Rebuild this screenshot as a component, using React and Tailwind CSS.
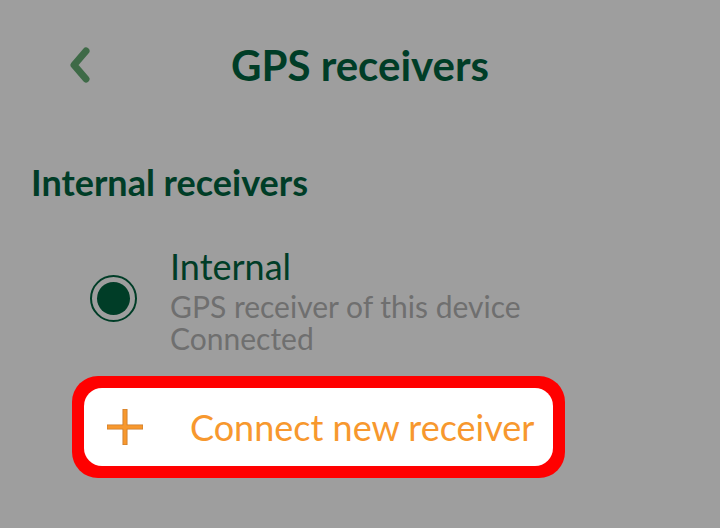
export default function App() {
    return (
        <div
            className="w-[720px] h-[528px] bg-[#9e9e9e] overflow-hidden"
            style={{ fontFamily: "Lato, 'Open Sans', sans-serif" }}
        >
            {/* Header */}
            <div className="relative h-[158px] flex items-start justify-center pt-[37px]">
                <button className="absolute left-[62px] top-[42px] w-[36px] h-[46px] flex items-center justify-center">
                    <svg width="24" height="36" viewBox="0 0 24 36">
                        <path
                            d="M18 4 L6 18 L18 32"
                            fill="none"
                            stroke="#3e6a47"
                            strokeWidth="7"
                            strokeLinecap="round"
                            strokeLinejoin="round"
                        />
                    </svg>
                </button>
                <h1 className="text-[42px] leading-[56px] font-bold text-[#003d27]">
                    GPS receivers
                </h1>
            </div>

            {/* Section */}
            <div className="pl-[31px]">
                <h2 className="text-[36px] leading-[48px] font-bold text-[#003d27]">
                    Internal receivers
                </h2>
            </div>

            <div className="mt-[36px] flex items-center pl-[90px]">
                <div className="w-[47px] h-[47px] rounded-full border-2 border-[#003d27] flex items-center justify-center">
                    <div className="w-[33px] h-[33px] rounded-full bg-[#003d27]" />
                </div>
                <div className="ml-[33px] flex flex-col">
                    <span className="text-[36px] leading-[48px] text-[#003d27]">Internal</span>
                    <span className="text-[30px] leading-[32px] text-[#6f6f6f]">
                        GPS receiver of this device
                    </span>
                    <span className="text-[30px] leading-[32px] text-[#6f6f6f]">Connected</span>
                </div>
            </div>

            {/* Connect button */}
            <div className="mt-[22px] ml-[72px] w-[493px] rounded-[26px] bg-[#ff0000] p-[12px]">
                <button className="w-full h-[78px] rounded-[18px] bg-white flex items-center pl-[21px]">
                    <svg width="40" height="40" viewBox="0 0 40 40">
                        <path d="M20 2 V38 M2 20 H38" stroke="#c97a2a" strokeWidth="5" />
                        <path d="M20 2.5 V37.5 M2.5 20 H37.5" stroke="#f7982e" strokeWidth="3.4" />
                    </svg>
                    <span className="ml-[45px] text-[36px] leading-[40px] text-[#f7982e]">
                        Connect new receiver
                    </span>
                </button>
            </div>
        </div>
    );
}
